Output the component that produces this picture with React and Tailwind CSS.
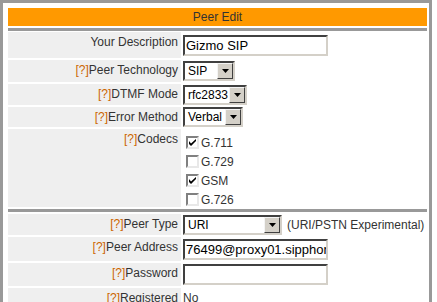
import React from "react";

function Help() {
  return <span className="text-[#cc6600]">[?]</span>;
}

function Label({ text, help = true }) {
  return (
    <div className="w-[173px] shrink-0 bg-[#efefef] pt-[3px] pr-[3px] text-right leading-[14px]">
      {help && <Help />}
      {text}
    </div>
  );
}

function TextBox({ value = "", width = 145 }) {
  return (
    <div
      className="h-[21px] overflow-hidden whitespace-nowrap border-2 border-t-[#404040] border-l-[#404040] border-r-[#d4d0c8] border-b-[#d4d0c8] bg-white pl-[1px] text-[13px] leading-[17px] text-black"
      style={{ width }}
    >
      {value}
    </div>
  );
}

function Select({ value, width }) {
  return (
    <div
      className="flex h-[20px] border-2 border-t-[#404040] border-l-[#404040] border-r-[#d4d0c8] border-b-[#d4d0c8] bg-white"
      style={{ width }}
    >
      <div className="flex-1 pl-[3px] text-[12px] leading-[16px] text-black">
        {value}
      </div>
      <div className="flex w-[16px] items-center justify-center border border-t-[#f4f4f4] border-l-[#f4f4f4] border-r-[#404040] border-b-[#404040] bg-[#d4d0c8]">
        <svg width="7" height="4" viewBox="0 0 7 4">
          <path d="M0 0h7L3.5 4z" fill="#000" />
        </svg>
      </div>
    </div>
  );
}

function Check({ checked, label }) {
  return (
    <div className="flex h-[19px] items-center gap-[2px]">
      <div className="flex h-[13px] w-[13px] items-center justify-center border-2 border-t-[#808080] border-l-[#808080] border-r-[#e8e8e8] border-b-[#e8e8e8] bg-white">
        {checked && (
          <svg width="7" height="7" viewBox="0 0 7 7">
            <path d="M0 2v3l2 2 5-5V0L2 4.5z" fill="#000" />
          </svg>
        )}
      </div>
      <span>{label}</span>
    </div>
  );
}

function Row({ h, label, help, children, top }) {
  return (
    <div className="flex gap-[2px]" style={{ height: h }}>
      <Label text={label} help={help} />
      <div className={top ? "flex-1" : "flex flex-1 items-center"}>
        {children}
      </div>
    </div>
  );
}

export default function App() {
  return (
    <div className="h-[302px] w-[437px] overflow-hidden bg-white font-['Liberation_Sans',Arial,sans-serif] text-[12px] text-[#333]">
      <div className="w-[432px] border-[3px] border-[#999] pt-[5px] pl-[5px] pr-[2px]">
        <div className="h-[18px] bg-[#ff9900] text-center leading-[18px]">
          Peer Edit
        </div>
        <div className="mt-[2px] h-[3px] bg-[#999]" />
        <div className="mt-[1px] flex flex-col gap-[2px]">
          <Row h={26} label="Your Description" help={false}>
            <TextBox value="Gizmo SIP" />
          </Row>
          <Row h={22} label="Peer Technology">
            <Select value="SIP" width={52} />
          </Row>
          <Row h={21} label="DTMF Mode">
            <Select value="rfc2833" width={64} />
          </Row>
          <Row h={20} label="Error Method">
            <Select value="Verbal" width={60} />
          </Row>
          <Row h={78} label="Codecs" top>
            <div className="pl-[3px] pt-[4px]">
              <Check checked label="G.711" />
              <Check label="G.729" />
              <Check checked label="GSM" />
              <Check label="G.726" />
            </div>
          </Row>
        </div>
        <div className="mt-[2px] h-[3px] bg-[#999]" />
        <div className="mt-[2px] flex flex-col gap-[2px]">
          <Row h={21} label="Peer Type">
            <Select value="URI" width={99} />
            <span className="ml-[5px]">(URI/PSTN Experimental)</span>
          </Row>
          <Row h={24} label="Peer Address">
            <TextBox value="76499@proxy01.sipphone.com" />
          </Row>
          <Row h={23} label="Password">
            <TextBox />
          </Row>
          <Row h={22} label="Registered" top>
            <div className="pt-[3px] leading-[14px]">No</div>
          </Row>
        </div>
      </div>
    </div>
  );
}
